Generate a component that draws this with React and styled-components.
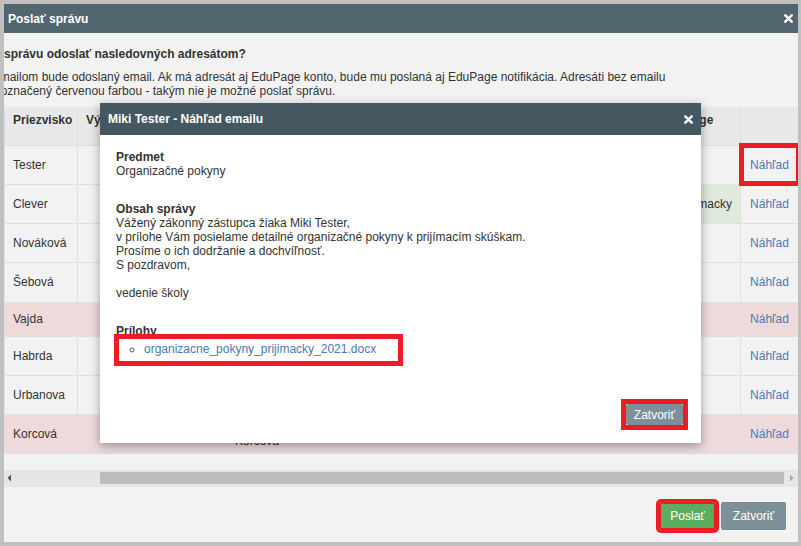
import React from 'react';
import styled, { createGlobalStyle } from 'styled-components';

const GlobalStyle = createGlobalStyle`
  html, body {
    margin: 0;
    padding: 0;
    background-color: #c0c0c0;
  }

  body {
    font-family: "Liberation Sans", Arial, sans-serif;
    font-size: 12px;
    color: #333;
  }
`;

const colors = {
  header: '#52666f',
  modalHeader: '#455862',
  body: '#f2f2f2',
  line: '#e0e0e0',
  headCell: '#e8e8e8',
  blocked: '#eedada',
  tagged: '#dfe9dc',
  link: '#4a7ab4',
  mark: '#ed1c24',
  green: '#5aae5e',
  grey: '#7d9099',
};

const Frame = styled.div`
  box-sizing: border-box;
  height: 546px;
  padding: 4px 3px 4px 4px;
`;

const Window = styled.div`
  position: relative;
  display: flex;
  flex-direction: column;
  width: 794px;
  height: 538px;
  overflow: hidden;
  background-color: ${colors.body};
`;

const TitleBar = styled.div`
  display: flex;
  flex: none;
  justify-content: space-between;
  align-items: center;
  height: ${(p) => p.$height}px;
  padding: 0 ${(p) => p.$right}px 0 ${(p) => p.$left}px;
  background-color: ${(p) => p.$bg};
  color: #fff;
  font-size: 12px;
  font-weight: bold;
`;

const Body = styled.div`
  display: flex;
  flex: 1;
  flex-direction: column;
`;

const Intro = styled.div`
  padding-top: 14px;
  white-space: nowrap;
`;

const Question = styled.div`
  font-weight: bold;
  line-height: 15px;
  margin-bottom: 8px;
`;

const IntroLine = styled.div`
  line-height: 14px;
  margin-left: -${(p) => p.$shift}px;
`;

const TableWrap = styled.div`
  margin-top: 9px;
`;

const Table = styled.table`
  width: 794px;
  table-layout: fixed;
  border-collapse: collapse;
  font-size: 12px;
  line-height: 14px;
`;

const Th = styled.th`
  height: 38px;
  padding: 6px ${(p) => p.$pad ?? 8}px;
  border: 1px solid ${colors.line};
  border-top: none;
  background-color: ${colors.headCell};
  text-align: left;
  vertical-align: top;
  white-space: nowrap;
  overflow: hidden;
  box-sizing: border-box;
`;

const Row = styled.tr`
  height: ${(p) => p.$height}px;
  background-color: ${(p) => (p.$blocked ? colors.blocked : 'transparent')};
`;

const Td = styled.td`
  padding: 0 8px;
  border: 1px solid ${colors.line};
  white-space: nowrap;
  overflow: hidden;
  text-align: ${(p) => p.$align || 'left'};
  background-color: ${(p) => (p.$tagged ? colors.tagged : 'transparent')};
  outline: ${(p) => (p.$marked ? `5px solid ${colors.mark}` : 'none')};
  outline-offset: -3px;
`;

const Stack = styled.div`
  white-space: normal;
`;

const Link = styled.a`
  color: ${colors.link};
  text-decoration: none;
  cursor: pointer;
`;

const ScrollTrack = styled.div`
  display: flex;
  align-items: center;
  height: 17px;
  margin-top: 16px;
  background-color: #e6e6e6;
`;

const ScrollArrow = styled.div`
  flex: none;
  display: flex;
  justify-content: ${(p) => (p.$end ? 'center' : 'flex-start')};
  width: ${(p) => p.$width}px;
  padding-left: ${(p) => (p.$end ? 0 : 3)}px;
  box-sizing: border-box;
`;

const ScrollThumb = styled.div`
  flex: 1;
  height: 12px;
  background-color: #bdbdbd;
`;

const Footer = styled.div`
  display: flex;
  flex: 1;
  justify-content: flex-end;
  align-items: flex-start;
  gap: 5px;
  padding: 15px 12px 0 0;
`;

const Button = styled.button`
  box-sizing: border-box;
  height: ${(p) => p.$height}px;
  padding: 0 ${(p) => p.$pad}px;
  border: ${(p) => (p.$marked ? `2px solid ${colors.mark}` : 'none')};
  border-radius: 2px;
  outline: ${(p) => (p.$marked ? `3px solid ${colors.mark}` : 'none')};
  font-family: inherit;
  font-size: 12px;
  color: #fff;
  background-color: ${(p) => (p.$variant === 'green' ? colors.green : colors.grey)};
  cursor: pointer;
`;

const Modal = styled.div`
  position: absolute;
  top: 99px;
  left: 96px;
  display: flex;
  flex-direction: column;
  width: 601px;
  height: 340px;
  background-color: #fff;
  box-shadow: 0 3px 10px rgba(0, 0, 0, 0.35);
`;

const ModalContent = styled.div`
  flex: 1;
  padding: 15px 16px 0;
  line-height: 14px;
  color: #333;
`;

const Section = styled.div`
  & + & {
    margin-top: 24px;
  }
`;

const SectionTitle = styled.div`
  font-weight: bold;
`;

const Attachments = styled.ul`
  box-sizing: border-box;
  width: 279px;
  height: 22px;
  margin: 1px 0 0 3px;
  padding: 0 0 0 25px;
  list-style-type: circle;
  line-height: 20px;
  outline: 5px solid ${colors.mark};
`;

const Bullet = styled.li`
  &::marker {
    color: #555;
  }
`;

const ModalFooter = styled.div`
  display: flex;
  justify-content: flex-end;
  padding: 0 18px 18px 0;
`;

const Buttons = styled.div`
  outline: 5px solid ${colors.mark};
  display: flex;
`;

const CloseIcon = () => (
  <svg width="9" height="9" viewBox="0 0 9 9">
    <path d="M1.3 1.3 L7.7 7.7 M7.7 1.3 L1.3 7.7" stroke="#fff" strokeWidth="2.4" strokeLinecap="round" />
  </svg>
);

const Arrow = ({ dir }) => (
  <svg width="5" height="8" viewBox="0 0 5 8">
    {dir === 'left'
      ? <path d="M4 0.5 L0.5 4 L4 7.5 Z" fill="#555" />
      : <path d="M1 0.5 L4.5 4 L1 7.5 Z" fill="#a9a9a9" />}
  </svg>
);

const widths = [73, 64, 85, 64, 227, 140, 83, 58];
const heads = ['Priezvisko', 'Výsledok', 'Meno', 'Trieda', 'Email', 'Rodič', 'EduPage', ''];

const rows = [
  { name: 'Tester', first: 'Miki', marked: true, height: 39 },
  { name: 'Clever', first: 'Ján', tag: 'prijimacky', height: 39 },
  { name: 'Nováková', first: 'Eva', height: 39 },
  { name: 'Šebová', first: 'Lucia', height: 40 },
  { name: 'Vajda', first: 'Peter', blocked: true, height: 34 },
  { name: 'Habrda', first: 'Martin', height: 39 },
  { name: 'Urbanova', first: 'Zuzana', height: 39 },
  { name: 'Korcová', first: 'Klára', blocked: true, twoLine: true, height: 39 },
];

const App = () => (
  <>
    <GlobalStyle />
    <Frame>
      <Window>
        <TitleBar $height={29} $left={4} $right={5} $bg={colors.header}>
          <span>Poslať správu</span>
          <CloseIcon />
        </TitleBar>
        <Body>
          <Intro>
            <Question>správu odoslať nasledovných adresátom?</Question>
            <IntroLine $shift={11}>
              emailom bude odoslaný email. Ak má adresát aj EduPage konto, bude mu poslaná aj EduPage notifikácia. Adresáti bez emailu
            </IntroLine>
            <IntroLine $shift={16}>je označený červenou farbou - takým nie je možné poslať správu.</IntroLine>
          </Intro>
          <TableWrap>
            <Table>
              <colgroup>
                {widths.map((w, i) => <col key={i} style={{ width: w }} />)}
              </colgroup>
              <thead>
                <tr>
                  {heads.map((h, i) => <Th key={i} $pad={i === 6 ? 4 : 8}>{h}</Th>)}
                </tr>
              </thead>
              <tbody>
                {rows.map((r) => (
                  <Row key={r.name} $blocked={r.blocked} $height={r.height}>
                    <Td>{r.name}</Td>
                    <Td />
                    <Td>{r.first}</Td>
                    <Td>
                      {r.twoLine
                        ? <Stack>{r.first}<br />{r.name}</Stack>
                        : null}
                    </Td>
                    <Td />
                    <Td />
                    <Td $tagged={!!r.tag} $align="right">{r.tag}</Td>
                    <Td $align="center" $marked={r.marked}><Link>Náhľad</Link></Td>
                  </Row>
                ))}
              </tbody>
            </Table>
          </TableWrap>
          <ScrollTrack>
            <ScrollArrow $width={96}><Arrow dir="left" /></ScrollArrow>
            <ScrollThumb />
            <ScrollArrow $width={14} $end><Arrow dir="right" /></ScrollArrow>
          </ScrollTrack>
          <Footer>
            <Button $variant="green" $marked $height={28} $pad={9}>Poslať</Button>
            <Button $height={28} $pad={12}>Zatvoriť</Button>
          </Footer>
        </Body>

        <Modal>
          <TitleBar $height={32} $left={8} $right={8} $bg={colors.modalHeader}>
            <span>Miki Tester - Náhľad emailu</span>
            <CloseIcon />
          </TitleBar>
          <ModalContent>
            <Section>
              <SectionTitle>Predmet</SectionTitle>
              <div>Organizačné pokyny</div>
            </Section>
            <Section>
              <SectionTitle>Obsah správy</SectionTitle>
              <div>Vážený zákonný zástupca žiaka Miki Tester,</div>
              <div>v prílohe Vám posielame detailné organizačné pokyny k prijímacím skúškam.</div>
              <div>Prosíme o ich dodržanie a dochvíľnosť.</div>
              <div>S pozdravom,</div>
              <br />
              <div>vedenie školy</div>
            </Section>
            <Section>
              <SectionTitle>Prílohy</SectionTitle>
              <Attachments>
                <Bullet><Link>organizacne_pokyny_prijimacky_2021.docx</Link></Bullet>
              </Attachments>
            </Section>
          </ModalContent>
          <ModalFooter>
            <Buttons>
              <Button $height={21} $pad={8}>Zatvoriť</Button>
            </Buttons>
          </ModalFooter>
        </Modal>
      </Window>
    </Frame>
  </>
);

export default App;
